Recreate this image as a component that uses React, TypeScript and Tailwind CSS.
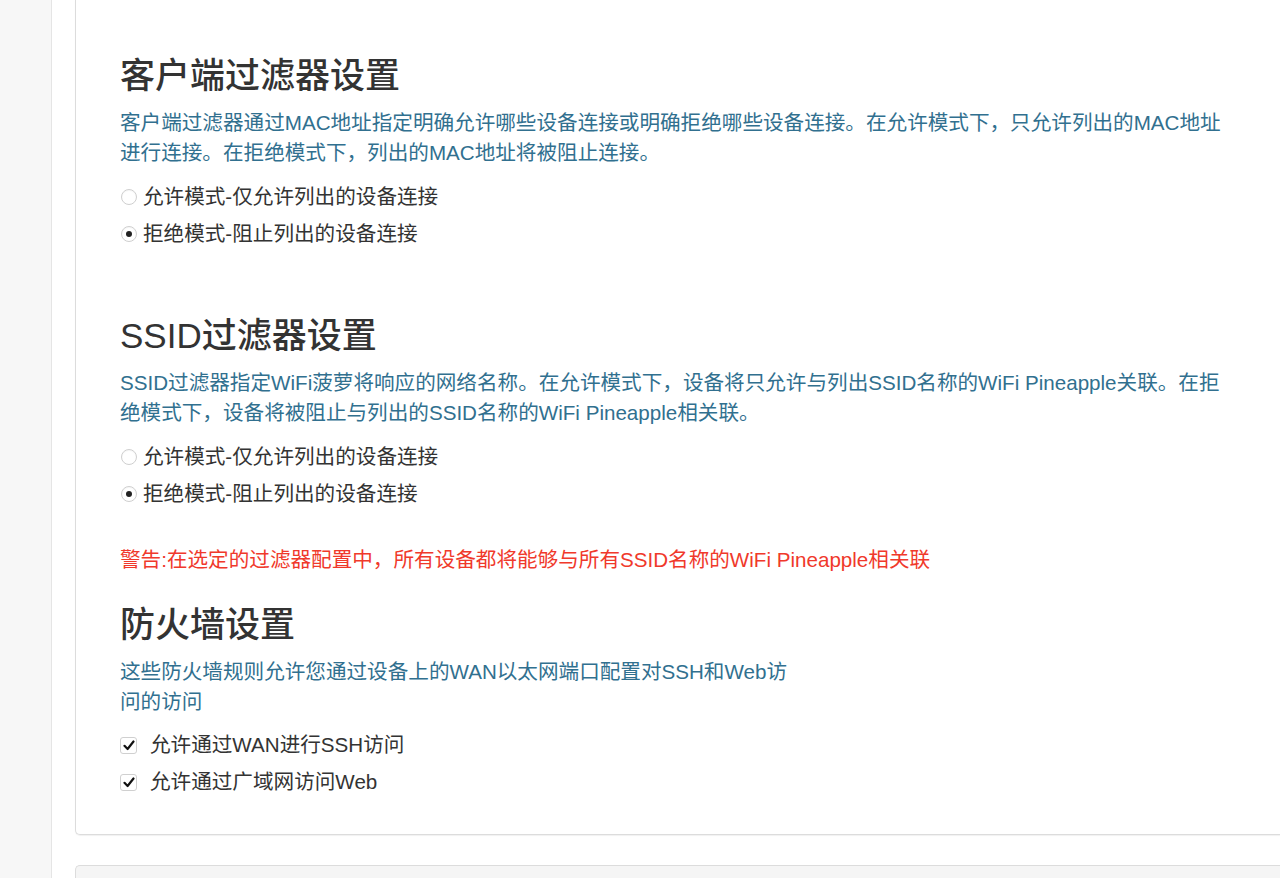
import React from "react";

const FONT = {
  fontFamily: '"Liberation Sans", "Noto Sans CJK SC", sans-serif',
};

function Heading({ children, className = "" }: { children: React.ReactNode; className?: string }) {
  return (
    <h3 className={`text-[35px] leading-[39px] font-medium text-[#333] ${className}`}>
      {children}
    </h3>
  );
}

function Desc({ children, className = "" }: { children: React.ReactNode; className?: string }) {
  return <p className={`text-[20.6px] leading-[30px] text-[#31708f] ${className}`}>{children}</p>;
}

function Radio({ checked, label }: { checked?: boolean; label: string }) {
  return (
    <label className="flex items-center h-[30px] text-[20.6px] text-[#333]">
      <span className="w-[16px] h-[16px] ml-[1px] mr-[6px] rounded-full border border-[#cfcfcf] bg-white flex items-center justify-center shadow-[inset_0_1px_1px_rgba(0,0,0,0.04)]">
        {checked && <span className="w-[6px] h-[6px] rounded-full bg-[#222]" />}
      </span>
      {label}
    </label>
  );
}

function Check({ label }: { label: string }) {
  return (
    <label className="flex items-center h-[30px] text-[20.6px] text-[#333]">
      <span className="w-[17px] h-[17px] mr-[13px] rounded-[3px] border border-[#d0d0d0] bg-white flex items-center justify-center">
        <svg width="12" height="11" viewBox="0 0 12 11" fill="none">
          <path d="M1.5 5.8 L4.6 9 L10.5 1.5" stroke="#111" strokeWidth="2.2" strokeLinecap="round" strokeLinejoin="round" />
        </svg>
      </span>
      {label}
    </label>
  );
}

export default function App() {
  return (
    <div className="flex h-[878px] w-full overflow-hidden bg-white" style={FONT}>
      <aside className="w-[52px] shrink-0 bg-[#f7f7f7] border-r border-[#e5e5e5]" />
      <main className="flex-1 min-w-0 pl-[23px] flex flex-col">
        <section className="border-l border-b border-[#dcdcdc] rounded-bl-[5px] shadow-[0_1px_1px_rgba(0,0,0,0.06)] pl-[44px] pt-[56px] pb-[37px]">
          <Heading className="mb-[13px]">客户端过滤器设置</Heading>
          <Desc className="w-[1116px]">
            客户端过滤器通过MAC地址指定明确允许哪些设备连接或明确拒绝哪些设备连接。在允许模式下，只允许列出的MAC地址进行连接。在拒绝模式下，列出的MAC地址将被阻止连接。
          </Desc>
          <div className="mt-[14px] flex flex-col gap-[7px]">
            <Radio label="允许模式-仅允许列出的设备连接" />
            <Radio checked label="拒绝模式-阻止列出的设备连接" />
          </div>

          <Heading className="mt-[67px] mb-[13px]">SSID过滤器设置</Heading>
          <Desc className="w-[1116px]">
            SSID过滤器指定WiFi菠萝将响应的网络名称。在允许模式下，设备将只允许与列出SSID名称的WiFi Pineapple关联。在拒绝模式下，设备将被阻止与列出的SSID名称的WiFi Pineapple相关联。
          </Desc>
          <div className="mt-[14px] flex flex-col gap-[7px]">
            <Radio label="允许模式-仅允许列出的设备连接" />
            <Radio checked label="拒绝模式-阻止列出的设备连接" />
          </div>

          <p className="mt-[36px] text-[20.6px] leading-[30px] text-[#f0392b]">
            警告:在选定的过滤器配置中，所有设备都将能够与所有SSID名称的WiFi Pineapple相关联
          </p>

          <Heading className="mt-[30px] mb-[13px]">防火墙设置</Heading>
          <Desc className="w-[680px]">
            这些防火墙规则允许您通过设备上的WAN以太网端口配置对SSH和Web访问的访问
          </Desc>
          <div className="mt-[13px] flex flex-col gap-[7px]">
            <Check label="允许通过WAN进行SSH访问" />
            <Check label="允许通过广域网访问Web" />
          </div>
        </section>
        <div className="mt-[30px] h-[60px] shrink-0 border-l border-t border-[#dcdcdc] rounded-tl-[5px] bg-[#f5f5f5]" />
      </main>
    </div>
  );
}
